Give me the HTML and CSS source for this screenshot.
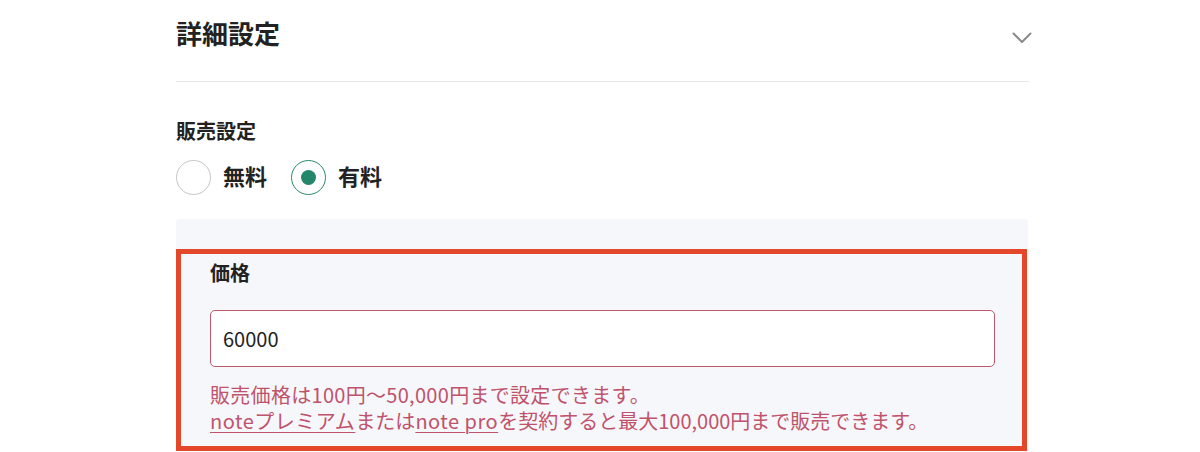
FILE: index.html
```html
<!DOCTYPE html>
<html lang="ja">
<head>
<meta charset="utf-8">
<title>詳細設定</title>
<link rel="stylesheet" href="styles.css">
</head>
<body>
<div class="panel">
  <div class="header">
    <h2 class="title">詳細設定</h2>
    <svg class="chevron" width="20" height="12" viewBox="0 0 20 12" aria-hidden="true">
      <path d="M1.5 1.5 L10 10 L18.5 1.5" fill="none" stroke="#8a8a8a" stroke-width="2" stroke-linecap="round" stroke-linejoin="round"/>
    </svg>
  </div>

  <div class="section-label">販売設定</div>
  <div class="radios">
    <label class="radio">
      <span class="circle"></span>
      <span class="radio-text">無料</span>
    </label>
    <label class="radio checked">
      <span class="circle"><span class="dot"></span></span>
      <span class="radio-text">有料</span>
    </label>
  </div>

  <div class="price-box">
    <div class="highlight">
      <div class="field-label">価格</div>
      <div class="input">60000</div>
      <div class="error">
        <div class="error-line">販売価格は100円～50,000円まで設定できます。</div>
        <div class="error-line"><a class="link" href="#">noteプレミアム</a>または<a class="link" href="#">note pro</a>を契約すると最大100,000円まで販売できます。</div>
      </div>
    </div>
  </div>
</div>
</body>
</html>
```

FILE: styles.css
```css
html, body {
  margin: 0;
  padding: 0;
  background: #ffffff;
}

body {
  font-family: "Noto Sans CJK JP", "Noto Sans", sans-serif;
  color: #222222;
  overflow: hidden;
}

.panel {
  width: 853px;
  margin-left: 176px;
}

.header {
  height: 81px;
  border-bottom: 1px solid #e6e6e6;
  display: flex;
  justify-content: space-between;
  align-items: flex-start;
}

.title {
  margin: 15px 0 0 0;
  font-size: 26px;
  line-height: 36px;
  font-weight: 700;
  color: #222222;
}

.chevron {
  margin-top: 32px;
  margin-right: -3px;
}

.section-label {
  margin-top: 35px;
  font-size: 20px;
  line-height: 28px;
  font-weight: 700;
}

.radios {
  margin-top: 15px;
  display: flex;
  gap: 24px;
  height: 35px;
}

.radio {
  display: flex;
  align-items: center;
  gap: 12px;
}

.circle {
  box-sizing: border-box;
  width: 35px;
  height: 35px;
  border-radius: 50%;
  border: 1.5px solid #c6c6c6;
  background: #ffffff;
  display: flex;
  align-items: center;
  justify-content: center;
}

.checked .circle {
  border-color: #2a8a68;
}

.dot {
  width: 15px;
  height: 15px;
  border-radius: 50%;
  background: #24866a;
}

.radio-text {
  font-size: 22px;
  line-height: 30px;
  font-weight: 700;
  padding-bottom: 6px;
}

.price-box {
  margin-top: 24px;
  width: 852px;
  background: #f5f7fa;
  border-radius: 3px 3px 0 0;
  padding-top: 30px;
}

.highlight {
  box-sizing: border-box;
  width: 851px;
  border: 5px solid #e4482a;
  padding: 5px 27px 12px 29px;
}

.field-label {
  font-size: 20px;
  line-height: 28px;
  font-weight: 700;
}

.input {
  box-sizing: border-box;
  margin-top: 23px;
  height: 57px;
  background: #ffffff;
  border: 1.5px solid #bb5a6f;
  border-radius: 5px;
  padding-left: 12px;
  display: flex;
  align-items: center;
  font-size: 20px;
  color: #222222;
}

.error {
  margin-top: 15px;
  font-size: 20px;
  color: #c0526b;
  white-space: nowrap;
}

.error-line {
  height: 26px;
  line-height: 26px;
}

.error-line:first-child {
  letter-spacing: 0.3px;
}

.link {
  display: inline-block;
  height: 26px;
  line-height: 26px;
  color: #c0526b;
  text-decoration: underline;
  text-underline-offset: 3px;
  text-decoration-thickness: 1px;
  letter-spacing: 0.5px;
}
```
